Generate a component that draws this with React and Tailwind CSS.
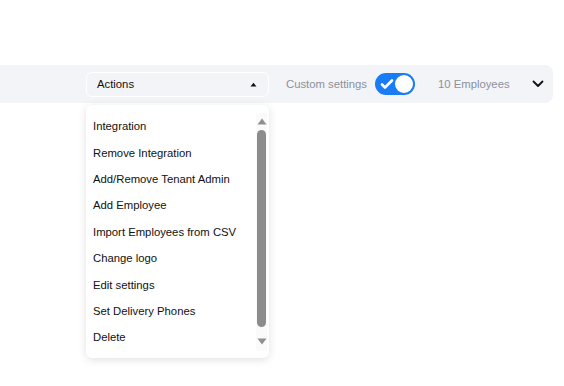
import React from "react";

const ITEMS = [
  "Integration",
  "Remove Integration",
  "Add/Remove Tenant Admin",
  "Add Employee",
  "Import Employees from CSV",
  "Change logo",
  "Edit settings",
  "Set Delivery Phones",
  "Delete",
];

function Toggle() {
  return (
    <div className="flex items-center w-[40px] h-[22px] rounded-full bg-[#1a7cf5] px-[2px] justify-between">
      <svg width="16" height="16" viewBox="0 0 16 16" className="ml-[2px]">
        <path d="M3 8.5l3 3 7-7" fill="none" stroke="#fff" strokeWidth="2.6" strokeLinecap="round" strokeLinejoin="round" />
      </svg>
      <div className="w-[18px] h-[18px] rounded-full bg-white" />
    </div>
  );
}

export default function App() {
  return (
    <div
      className="min-h-screen bg-white pt-[65px] pr-[11px] relative"
      style={{ fontFamily: '"Liberation Sans", Arial, sans-serif' }}
    >
      <div className="flex items-center h-[38px] bg-[#f3f4f8] rounded-r-lg pl-[86px]">
        <div className="relative">
          <div className="flex items-center justify-between w-[183px] h-[25px] border border-white rounded-md pl-[10px] pr-[11px] text-[11.3px] text-[#111]">
            <span>Actions</span>
            <svg width="7" height="5" viewBox="0 0 7 5">
              <path d="M0.5 4.5L3.5 0.8L6.5 4.5Z" fill="#111" />
            </svg>
          </div>

          {/* dropdown menu */}
          <div className="absolute left-0 top-[33px] w-[183px] h-[253px] bg-white rounded-md shadow-[0_2px_8px_rgba(0,0,0,0.12)] flex z-10">
            <ul className="flex-1 flex flex-col pt-[9px] pl-[7px] text-[11.3px] text-[#111]">
              {ITEMS.map((it) => (
                <li key={it} className="h-[26.4px] flex items-center">
                  {it}
                </li>
              ))}
            </ul>
            <div className="w-[11px] mr-[2px] mt-[8px] mb-[7px] bg-[#fafafa] flex flex-col items-center">
              <svg width="10" height="12" viewBox="0 0 10 12" className="mt-[1px]">
                <path d="M0.5 10.5L5 4.5L9.5 10.5Z" fill="#8f8f8f" />
              </svg>
              <div className="w-[9px] flex-1 rounded-full bg-[#8c8c8c] mt-[4px] mb-[10px]" />
              <svg width="10" height="12" viewBox="0 0 10 12" className="mb-[2px]">
                <path d="M0.5 1.5L5 7.5L9.5 1.5Z" fill="#8f8f8f" />
              </svg>
            </div>
          </div>
        </div>

        <span className="ml-[17px] text-[11.3px] text-[#8c919b]">Custom settings</span>
        <div className="ml-[8px]">
          <Toggle />
        </div>
        <span className="ml-[23px] text-[11.3px] text-[#8c919b]">10 Employees</span>
        <svg width="12" height="8" viewBox="0 0 12 8" className="ml-[22px]">
          <path d="M1.5 1.5L6 6L10.5 1.5" fill="none" stroke="#111" strokeWidth="1.8" strokeLinecap="round" strokeLinejoin="round" />
        </svg>
      </div>
    </div>
  );
}
